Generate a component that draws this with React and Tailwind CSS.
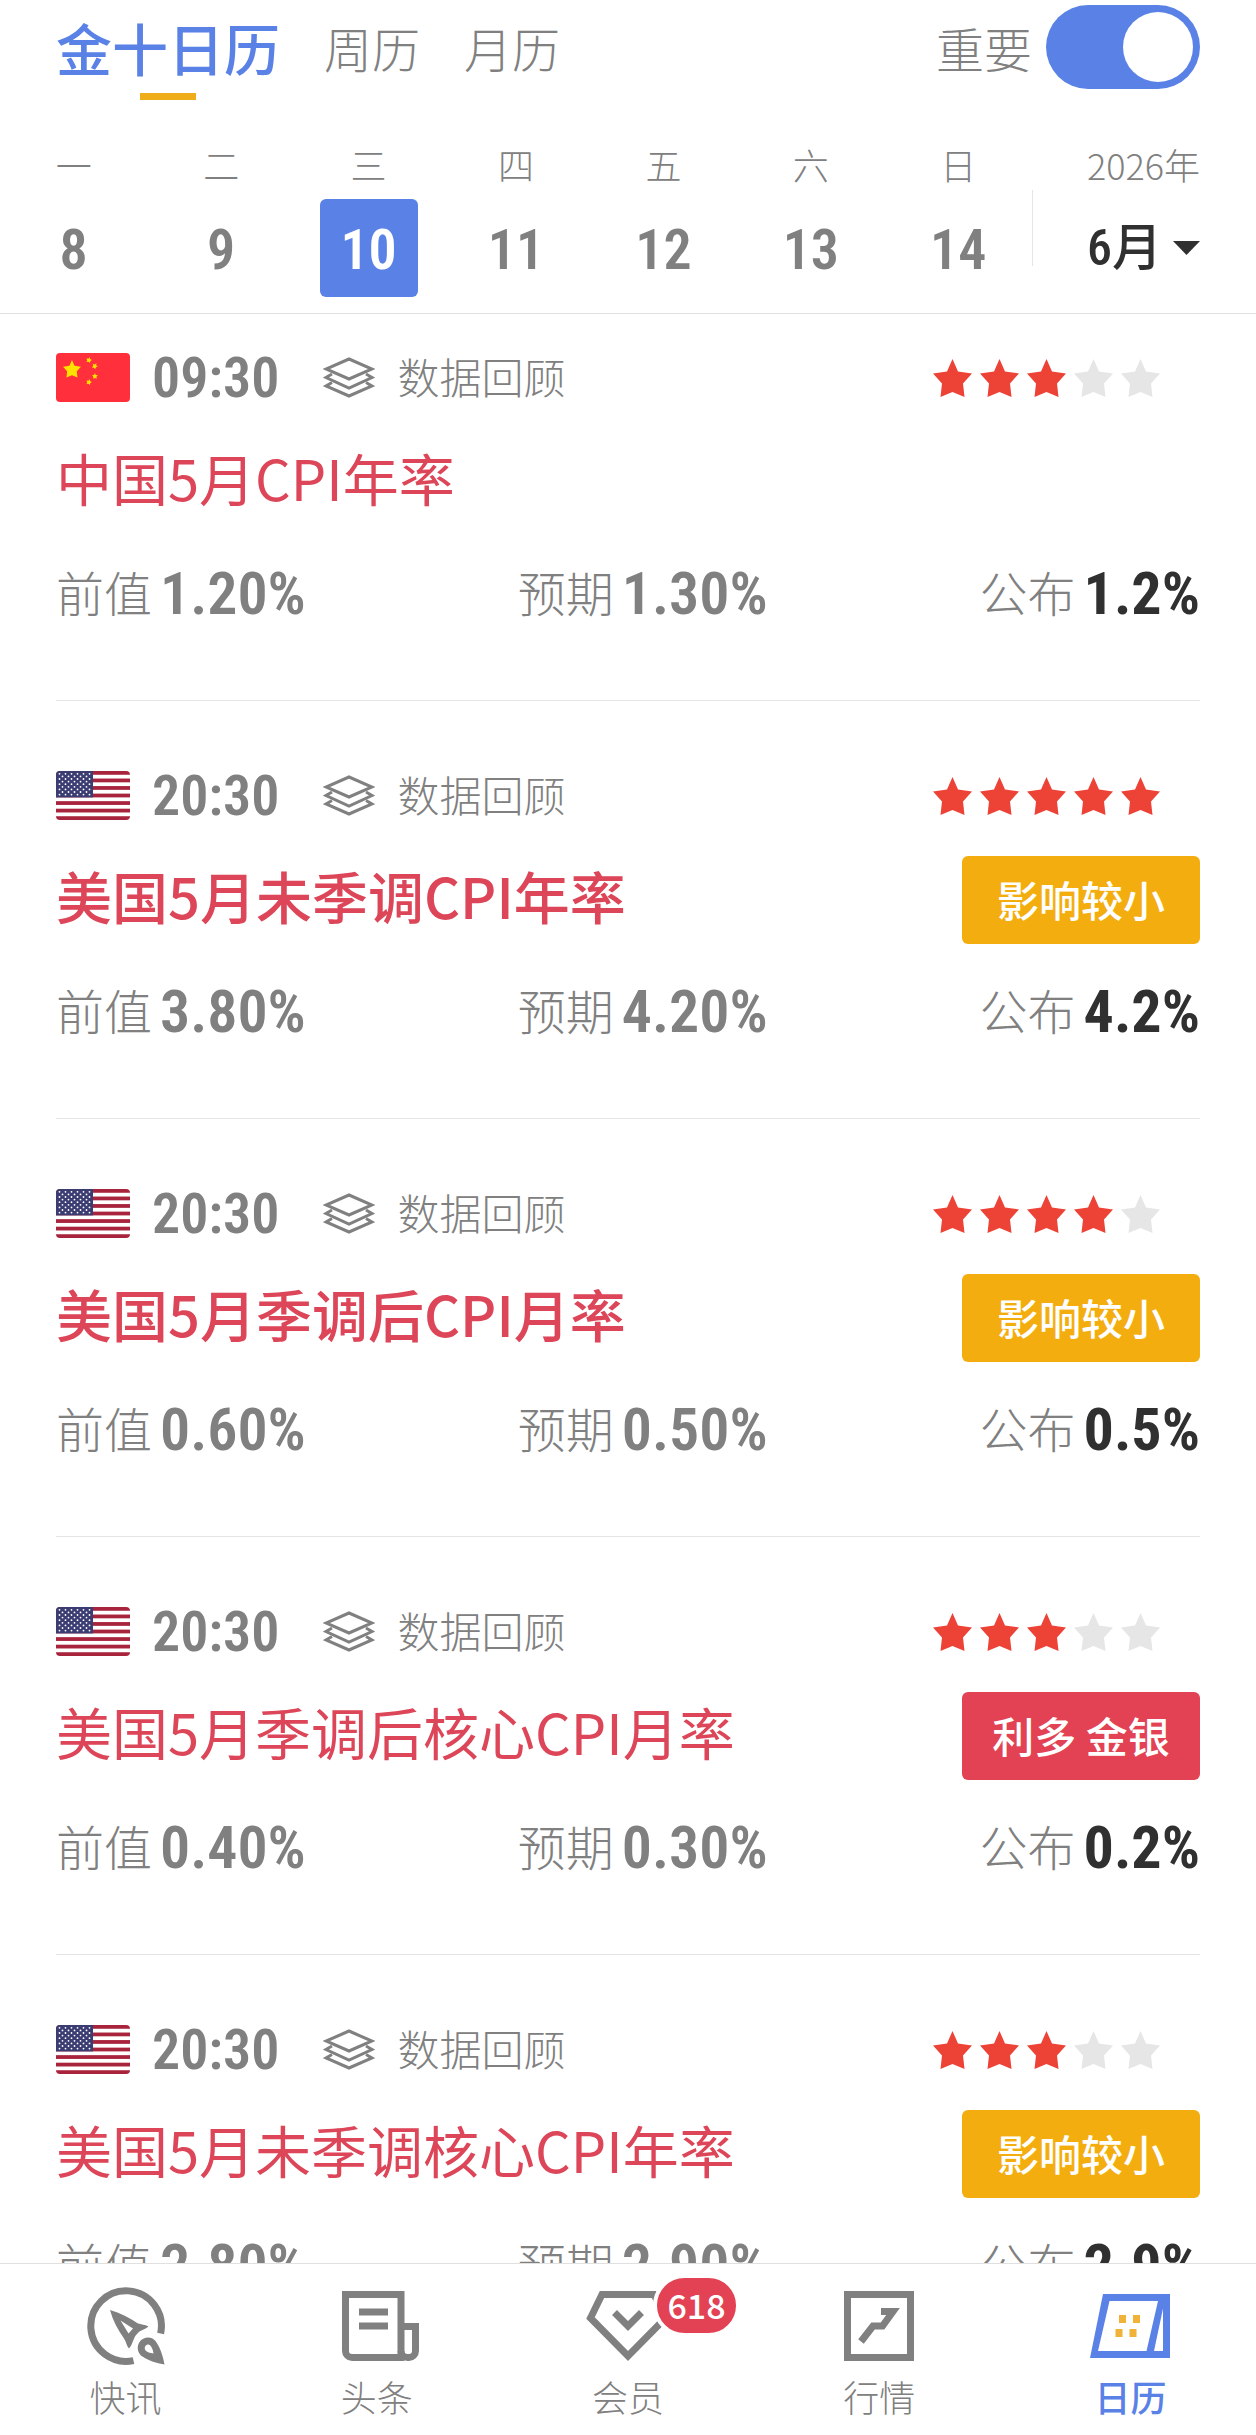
import { useState } from "react";
import clsx from "clsx";

const tabs = ["金十日历", "周历", "月历"];

const weekDays = [
  { label: "一", day: 8 },
  { label: "二", day: 9 },
  { label: "三", day: 10 },
  { label: "四", day: 11 },
  { label: "五", day: 12 },
  { label: "六", day: 13 },
  { label: "日", day: 14 },
];

const months = [1, 2, 3, 4, 5, 6, 7, 8, 9, 10, 11, 12];

const events = [
  {
    id: 1,
    country: "cn",
    time: "09:30",
    title: "中国5月CPI年率",
    stars: 3,
    previous: "1.20%",
    forecast: "1.30%",
    actual: "1.2%",
  },
  {
    id: 2,
    country: "us",
    time: "20:30",
    title: "美国5月未季调CPI年率",
    stars: 5,
    effect: { text: "影响较小", type: "neutral" },
    previous: "3.80%",
    forecast: "4.20%",
    actual: "4.2%",
  },
  {
    id: 3,
    country: "us",
    time: "20:30",
    title: "美国5月季调后CPI月率",
    stars: 4,
    effect: { text: "影响较小", type: "neutral" },
    previous: "0.60%",
    forecast: "0.50%",
    actual: "0.5%",
  },
  {
    id: 4,
    country: "us",
    time: "20:30",
    title: "美国5月季调后核心CPI月率",
    stars: 3,
    effect: { text: "利多 金银", type: "bullish" },
    previous: "0.40%",
    forecast: "0.30%",
    actual: "0.2%",
  },
  {
    id: 5,
    country: "us",
    time: "20:30",
    title: "美国5月未季调核心CPI年率",
    stars: 3,
    effect: { text: "影响较小", type: "neutral" },
    previous: "2.80%",
    forecast: "2.90%",
    actual: "2.9%",
  },
];

const STAR = "19.5,0 25,12.5 39,14.5 30,24.5 31.5,38 19.5,33 7.5,38 9,24.5 0,14.5 14,12.5";

const ChinaFlag = () => (
  <svg width="74" height="49" viewBox="0 0 74 49" role="img" aria-label="中国" className="rounded-[4px]">
    <rect width="74" height="49" fill="#ff2f3b" />
    <g fill="#ffe100">
      <polygon points={STAR} transform="translate(7 7) scale(0.46)" />
      <polygon points={STAR} transform="translate(30 4) rotate(15 3 3) scale(0.15)" />
      <polygon points={STAR} transform="translate(36 10) rotate(30 3 3) scale(0.15)" />
      <polygon points={STAR} transform="translate(36 20) scale(0.15)" />
      <polygon points={STAR} transform="translate(30 26) rotate(15 3 3) scale(0.15)" />
    </g>
  </svg>
);

const UsFlag = () => (
  <svg width="74" height="49" viewBox="0 0 74 49" role="img" aria-label="美国" className="rounded-[4px]">
    <rect width="74" height="49" fill="#fff" />
    {[0, 1, 2, 3, 4, 5, 6].map((i) => (
      <rect key={i} y={i * 7.54} width="74" height="3.77" fill="#a8233c" />
    ))}
    <rect width="37" height="26.4" fill="#3b3c72" />
    {[0, 1, 2, 3, 4, 5, 6, 7, 8].map((row) =>
      (row % 2 ? [0, 1, 2, 3, 4] : [0, 1, 2, 3, 4, 5]).map((col) => (
        <circle
          key={`${row}-${col}`}
          cx={3.5 + col * 6 + (row % 2 ? 3 : 0)}
          cy={2.8 + row * 2.6}
          r="0.9"
          fill="#fff"
        />
      ))
    )}
  </svg>
);

const LayersIcon = () => (
  <svg width="52" height="41" viewBox="0 0 52 41" fill="none" stroke="#808080" strokeWidth="3" aria-hidden="true">
    <path d="M26 2 49 12 26 22 3 12Z" />
    <path d="M9 17 3 20.5 26 31 49 20.5 43 17" />
    <path d="M9 25.5 3 29 26 39 49 29 43 25.5" />
  </svg>
);

const RocketIcon = () => (
  <svg width="78" height="78" viewBox="0 0 78 78" aria-hidden="true">
    <path d="M73.6 46.5A35.3 35.3 0 1 0 46.5 73.6" fill="none" stroke="#808080" strokeWidth="7" />
    <path
      fill="#808080"
      fillRule="evenodd"
      d="M23 23C33 26 43 31 51 36.500C54 37.500 58 37.500 61.500 39.500C58 42.500 53 43 50 47C46 51 46 57 42 61.500C39.500 59 39.500 55 37 51.500C31 43 26 34 23 23ZM33.500 33.500 41.500 46.500 46 41.500Z"
    />
    <path
      fill="#808080"
      fillRule="evenodd"
      d="M77.500 77.500C76 69 73 60 68.500 54C64 48.500 56 50 52.500 55C49.500 59.500 50.500 65.500 54.500 69C61 73.500 69 76 77.500 77.500ZM66.500 66.500C63 66 60 65.500 58.200 63C57 60 58.500 57.500 61.500 57.500C64.500 58.500 66 62.500 66.500 66.500Z"
    />
  </svg>
);

const NewsIcon = () => (
  <svg width="84" height="70" viewBox="-7 0 84 70" fill="none" stroke="#808080" strokeWidth="7" aria-hidden="true">
    <path d="M3.500 3.500H59V66.500H10A6.500 6.500 0 0 1 3.500 60Z" />
    <path d="M59 35.500H73.500V60A6.500 6.500 0 0 1 67 66.500H65.500A6.500 6.500 0 0 1 59 60" />
    <path d="M17 21H46M17 35H46" />
  </svg>
);

const MemberIcon = () => (
  <svg width="84" height="70" viewBox="0 0 84 70" fill="none" stroke="#808080" strokeWidth="7" aria-hidden="true">
    <path d="M16 3.500H68L79.500 27 42 65 4.500 27Z" />
    <path d="M28.500 21.500 42 35 55.500 21.500" />
  </svg>
);

const MarketIcon = () => (
  <svg width="70" height="70" viewBox="0 0 70 70" fill="none" stroke="#808080" strokeWidth="7" aria-hidden="true">
    <rect x="3.500" y="3.500" width="63" height="63" />
    <path d="M17 50.500 29 35H38.500L49 20.500H37" />
  </svg>
);

const CalendarIcon = () => (
  <svg width="80" height="64" viewBox="0 0 80 64" aria-hidden="true">
    <path
      fill="#5a82e6"
      fillRule="evenodd"
      d="M13 0H80V64H0ZM19.500 7 8 57H56.500L68 7ZM73 14.500 64 57H73Z"
    />
    <path fill="#f0b239" d="M29 21h7v8h-7ZM43 21h7v8h-7ZM25.500 35h7v8h-7ZM39.500 35h7v8h-7Z" />
  </svg>
);

const navItems = [
  { label: "快讯", icon: RocketIcon },
  { label: "头条", icon: NewsIcon },
  { label: "会员", icon: MemberIcon, badge: "618" },
  { label: "行情", icon: MarketIcon },
  { label: "日历", icon: CalendarIcon, active: true },
];

const Stars = ({ count }) => (
  <div className="flex gap-2 mr-10" role="img" aria-label={`${count}`}>
    {[1, 2, 3, 4, 5].map((n) => (
      <svg key={n} width="39" height="38" viewBox="0 0 39 38">
        <polygon points={STAR} fill={n <= count ? "#ed4337" : "#e6e6e6"} />
      </svg>
    ))}
  </div>
);

const Figure = ({ label, value, strong }) => (
  <div className="flex items-start gap-2">
    <dt className="text-5xl leading-[60px] font-light">{label}</dt>
    <dd
      className={clsx(
        "font-['Roboto_Condensed','Noto_Sans_CJK_SC',sans-serif] text-6xl leading-[66px]",
        strong ? "font-bold text-[#303030]" : "font-semibold"
      )}
    >
      {value}
    </dd>
  </div>
);

const EventCard = ({ event }) => {
  return (
    <li className="pt-[63px] pb-[73px] border-b border-[#e5e5e5] text-[#808080]">
      <div className="flex items-center justify-between h-16">
        <div className="flex items-start">
          <span className="flex items-center h-16">
            {event.country === "cn" ? <ChinaFlag /> : <UsFlag />}
          </span>
          <time className="ml-[22px] font-['Roboto_Condensed',sans-serif] text-[56px] leading-[66px] font-semibold">
            {event.time}
          </time>
          <a href="#review" className="ml-11 flex items-start gap-[22px] text-[42px] leading-[62px] font-light">
            <span className="flex items-center h-16">
              <LayersIcon />
            </span>
            数据回顾
          </a>
        </div>
        <Stars count={event.stars} />
      </div>

      <div className="mt-7 flex items-start justify-between h-[88px]">
        <h2
          className={clsx(
            "text-[56px] leading-[78px] text-[#dc4658]",
            event.id === 2 || event.id === 3 ? "font-medium" : "font-normal"
          )}
        >
          {event.title}
        </h2>
        {event.effect && (
          <span
            className={clsx(
              "w-[238px] h-[88px] rounded-md text-center text-[42px] leading-[86px] font-medium text-white",
              event.effect.type === "bullish" ? "bg-[#e24253]" : "bg-[#f4ad0f]"
            )}
          >
            {event.effect.text}
          </span>
        )}
      </div>

      <dl className="mt-[35px] flex justify-between">
        <Figure label="前值" value={event.previous} />
        <Figure label="预期" value={event.forecast} />
        <Figure label="公布" value={event.actual} strong />
      </dl>
    </li>
  );
};

const Header = () => {
  const [activeTab, setActiveTab] = useState(tabs[0]);
  const [selectedDay, setSelectedDay] = useState(10);
  const [month, setMonth] = useState(6);
  const [important, setImportant] = useState(true);

  return (
    <header className="shrink-0 border-b border-[#e0e0e0] text-[#808080]">
      <div className="flex items-center justify-between h-[100px] px-14">
        <div className="flex gap-11 h-full">
          {tabs.map((tab) => (
            <button
              key={tab}
              onClick={() => setActiveTab(tab)}
              className={clsx(
                "relative flex items-center h-full pb-1.5",
                tab === activeTab
                  ? "text-[56px] font-medium text-[#5a82e6]"
                  : "text-5xl font-light"
              )}
            >
              {tab}
              {tab === activeTab && (
                <span className="absolute bottom-0 left-1/2 -translate-x-1/2 w-14 h-[7px] bg-[#f0ad1a]" />
              )}
            </button>
          ))}
        </div>
        <label className="flex items-center gap-[14px] pb-1.5 text-5xl font-light">
          重要
          <input
            type="checkbox"
            checked={important}
            onChange={(e) => setImportant(e.target.checked)}
            className="appearance-none flex items-center p-[7px] w-[154px] h-[84px] rounded-full bg-gray-300 checked:bg-[#5a82e6] checked:justify-end before:block before:size-[70px] before:rounded-full before:bg-white"
          />
        </label>
      </div>

      <div className="flex pt-11 pb-4">
        <div className="grid grid-cols-7 flex-1">
          {weekDays.map(({ label, day }) => (
            <button
              key={day}
              onClick={() => setSelectedDay(day)}
              className="flex flex-col items-center gap-[15px]"
            >
              <span className="text-4xl leading-10 font-light">{label}</span>
              <span
                className={clsx(
                  "size-[98px] rounded-md font-['Roboto_Condensed',sans-serif] text-[56px] leading-[102px] font-semibold",
                  day === selectedDay && "bg-[#5a82e6] text-white"
                )}
              >
                {day}
              </span>
            </button>
          ))}
        </div>
        <div className="self-end mb-[31px] w-px h-[76px] bg-[#e5e5e5]" />
        <div className="flex flex-col gap-[15px] pl-[54px] pr-14">
          <span className="text-4xl leading-10 font-light">2026年</span>
          <div className="flex items-center justify-between h-[98px]">
            <select
              aria-label="月份"
              value={month}
              onChange={(e) => setMonth(Number(e.target.value))}
              className="appearance-none field-sizing-content bg-transparent font-['Roboto_Condensed','Noto_Sans_CJK_SC',sans-serif] text-[50px] leading-[68px] font-medium text-[#303030]"
            >
              {months.map((m) => (
                <option key={m} value={m}>
                  {m}月
                </option>
              ))}
            </select>
            <svg width="27" height="14" viewBox="0 0 27 14" className="pointer-events-none" aria-hidden="true">
              <path d="M0 0H27L13.500 14Z" fill="#303030" />
            </svg>
          </div>
        </div>
      </div>
    </header>
  );
};

const BottomNav = () => (
  <nav className="shrink-0 grid grid-cols-5 pt-[23px] pb-[19px] border-t border-[#e0e0e0]">
    {navItems.map(({ label, icon: Icon, badge, active }) => (
      <a
        key={label}
        href={`#${label}`}
        className={clsx(
          "flex flex-col items-center gap-[11px]",
          active ? "text-[#5a82e6] font-medium" : "text-[#808080] font-light"
        )}
      >
        <span className="relative flex items-center h-[78px]">
          <Icon />
          {badge && (
            <span className="absolute -top-[13px] left-[67px] w-[87px] h-[63px] rounded-full border-4 border-white bg-[#e24253] text-center text-[34px] leading-[54px] font-medium text-white">
              {badge}
            </span>
          )}
        </span>
        <span className="text-4xl leading-10">{label}</span>
      </a>
    ))}
  </nav>
);

export default function App() {
  return (
    <div className="flex flex-col h-screen bg-white font-['Noto_Sans_CJK_SC',sans-serif]">
      <Header />
      <main className="flex-1 min-h-0 overflow-y-auto [scrollbar-width:none]">
        <ul className="-mt-[31px] px-14">
          {events.map((event) => (
            <EventCard key={event.id} event={event} />
          ))}
        </ul>
      </main>
      <BottomNav />
    </div>
  );
}
